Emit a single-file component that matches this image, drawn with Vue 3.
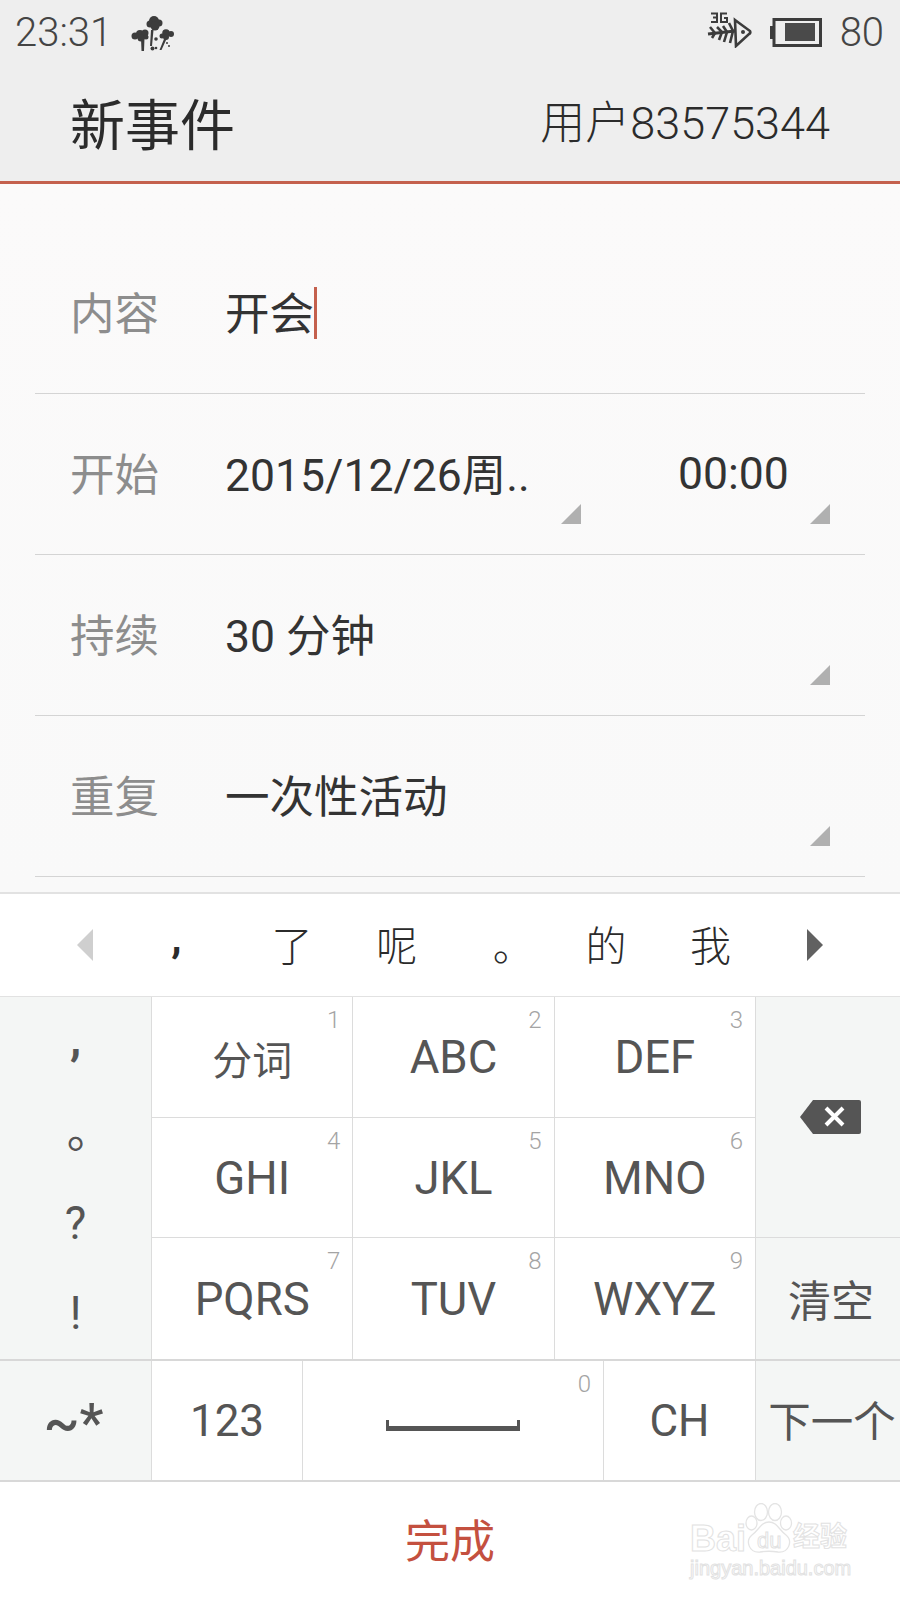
<script setup>
const rows = [
  { label: '内容', value: '开会', caret: true },
  { label: '开始', value: '2015/12/26周..', time: '00:00', arrow: true },
  { label: '持续', value: '30 分钟', arrow: true },
  { label: '重复', value: '一次性活动', arrow: true }
]
const suggestions = [
  { text: ',', cls: 'w-comma' },
  { text: '了', cls: '' },
  { text: '呢', cls: '' },
  { text: '。', cls: 'w-dot' },
  { text: '的', cls: '' },
  { text: '我', cls: '' }
]
const keys = [
  ['分词', '1', 'cjk'], ['ABC', '2', ''], ['DEF', '3', ''],
  ['GHI', '4', ''], ['JKL', '5', ''], ['MNO', '6', ''],
  ['PQRS', '7', ''], ['TUV', '8', ''], ['WXYZ', '9', '']
]
const punct = [
  { text: ',', cls: 'p-comma' },
  { text: '。', cls: 'p-dot' },
  { text: '?', cls: '' },
  { text: '!', cls: '' }
]
</script>

<template>
  <div class="phone">
    <header class="head">
      <div class="status">
        <span class="time">23:31</span>
        <svg class="flower" width="44" height="38" viewBox="0 0 44 38" fill="#3c3c3c">
          <circle cx="23" cy="8" r="5" /><circle cx="28" cy="10" r="3.500" /><circle cx="19" cy="11" r="3.500" /><circle cx="24" cy="13" r="4.500" />
          <circle cx="9" cy="21" r="4" /><circle cx="14" cy="20" r="3.500" /><circle cx="4" cy="23" r="3.500" /><circle cx="10" cy="25" r="3.500" /><circle cx="15" cy="24" r="2.500" />
          <circle cx="35" cy="20" r="3.800" /><circle cx="40" cy="21" r="3" /><circle cx="35" cy="24" r="3" /><circle cx="31" cy="23" r="2.500" />
          <path d="M10 25h3.500l-.5 13h-2.500zM20 17h2.500l-1.500 16h-2zM33 26h2.500l-5 11h-2z" />
          <circle cx="25" cy="26" r="1.800" /><circle cx="21.500" cy="35.500" r="2" /><circle cx="25" cy="35" r="1.300" /><circle cx="36" cy="30" r="1" /><circle cx="38" cy="33" r="1" />
        </svg>
        <span class="grow"></span>
        <svg class="fish" width="46" height="36" viewBox="0 0 46 36" fill="none" stroke="#3c3c3c">
          <path d="M1 22l27-3" stroke-width="3" />
          <path d="M3 15l5 6-3 5M10 15l5 5-3 8M16 14l4 6-3 10M22 11l4 8-3 12" stroke-width="2.600" />
          <path d="M28 8l15 11q1 2-1 3L29 34z" stroke-width="2.600" />
          <circle cx="36" cy="20" r="2" fill="#3c3c3c" stroke="none" />
          <path d="M4 1.500h6v4h-4h4v4.500h-6M20 1.500h-6v8.500h6v-4h-3" stroke-width="2" />
        </svg>
        <svg class="battery" width="52" height="29" viewBox="0 0 52 29">
          <rect x="0" y="8" width="3" height="13" fill="#3c3c3c" />
          <rect x="4" y="1.500" width="46.500" height="26" fill="none" stroke="#3c3c3c" stroke-width="3" />
          <rect x="15" y="5" width="30" height="18" fill="#4a4a4a" />
        </svg>
        <span class="level">80</span>
      </div>
      <div class="titlebar">
        <span class="title">新事件</span>
        <span class="account">用户83575344</span>
      </div>
    </header>

    <main class="form">
      <div v-for="row in rows" :key="row.label" class="row">
        <span class="label">{{ row.label }}</span>
        <span class="value">{{ row.value }}<i v-if="row.caret" class="caret"></i></span>
        <span v-if="row.time" class="time-value">{{ row.time }}</span>
        <i v-if="row.arrow" class="corner"></i>
        <i v-if="row.time" class="corner corner-date"></i>
      </div>
    </main>

    <div class="suggest">
      <svg class="arrow" width="18" height="32" viewBox="0 0 18 32"><path d="M17 0v32L1 16z" fill="#cfcfcf" /></svg>
      <div class="words">
        <span v-for="word in suggestions" :key="word.text" class="word" :class="word.cls">{{ word.text }}</span>
      </div>
      <svg class="arrow" width="18" height="32" viewBox="0 0 18 32"><path d="M1 0v32l16-16z" fill="#616161" /></svg>
    </div>

    <section class="keyboard">
      <div class="upper">
        <div class="side punct">
          <span v-for="p in punct" :key="p.text" :class="p.cls">{{ p.text }}</span>
        </div>
        <div class="keys">
          <div v-for="k in keys" :key="k[1]" class="key" :class="k[2]">
            <sup class="num">{{ k[1] }}</sup>{{ k[0] }}
          </div>
        </div>
        <div class="side actions">
          <div class="action del">
            <svg width="62" height="36" viewBox="0 0 62 36">
              <path d="M14 1h46a2 2 0 0 1 2 2v30a2 2 0 0 1-2 2H14L1 18z" fill="#555" />
              <path d="M27 9l17 17M44 9L27 26" stroke="#fff" stroke-width="4" />
            </svg>
          </div>
          <div class="action">清空</div>
        </div>
      </div>
      <div class="lower">
        <div class="lkey sym">~*</div>
        <div class="lkey k123">123</div>
        <div class="lkey space">
          <sup class="num">0</sup>
          <svg width="134" height="11" viewBox="0 0 134 11"><path d="M0 0h3v6h128V0h3v11H0z" fill="#555" /></svg>
        </div>
        <div class="lkey ch">CH</div>
        <div class="lkey next">下一个</div>
      </div>
    </section>

    <footer class="done">
      <span>完成</span>
      <div class="mark">
        <svg class="paw" width="48" height="51" viewBox="0 0 48 51" fill="#fff" stroke="#e4e4e4" stroke-width="1.300">
          <ellipse cx="16" cy="9" rx="6.500" ry="8.500" /><ellipse cx="30" cy="9" rx="6.500" ry="8.500" />
          <ellipse cx="6.500" cy="20" rx="5.500" ry="7" /><ellipse cx="41" cy="20" rx="5.500" ry="7" />
          <path d="M24 19c8 0 10 8 17 13 7 6 3 18-8 17-6-1-12-1-18 0-11 1-15-11-8-17 7-5 9-13 17-13z" />
        </svg>
        <span class="bai">Bai</span>
        <span class="du">du</span>
        <span class="jy">经验</span>
        <span class="mark-url">jingyan.baidu.com</span>
      </div>
    </footer>
  </div>
</template>

<style scoped>
.phone {
  width: 900px;
  height: 1600px;
  display: flex;
  flex-direction: column;
  overflow: hidden;
  background: #fff;
  color: #333;
  font-family: Roboto, "Noto Sans CJK SC", sans-serif;
  font-weight: 300;
}
.head {
  height: 184px;
  box-sizing: border-box;
  background: #eee;
  border-bottom: 3px solid #c4604d;
  flex: none;
}
.status {
  height: 62px;
  display: flex;
  align-items: center;
  padding: 2px 16px 0 15px;
  box-sizing: border-box;
  color: #444;
}
.time { font-size: 40px; }
.flower { margin-left: 19px; }
.grow { flex: 1; }
.fish { margin-right: 17px; margin-top: -4px; }
.battery { margin-right: 18px; }
.level { font-size: 40px; }
.titlebar {
  display: flex;
  align-items: center;
  justify-content: space-between;
  padding: 0 70px 0 70px;
  height: 120px;
  margin-top: -1px;
  color: #2b2b2b;
}
.title { font-size: 55px; font-weight: 400; }
.account { font-size: 45px; padding-bottom: 4px; }
.form {
  flex: 1;
  background: linear-gradient(#fbfafa, #f9f9f9);
  padding: 49px 35px 0;
  box-sizing: border-box;
  border-bottom: 2px solid #e2e2e2;
}
.row {
  height: 161px;
  box-sizing: border-box;
  border-bottom: 1px solid #d4d4d4;
  display: flex;
  align-items: center;
  padding: 0 0 6px 36px;
  position: relative;
  font-size: 44.500px;
}
.label { width: 155px; margin-left: -1px; color: #8d8d8d; font-weight: 400; }
.value { color: #333; font-weight: 400; display: inline-flex; align-items: center; }
.time-value { position: absolute; left: 643px; margin-top: 6px; color: #333; font-weight: 400; }
.caret { width: 3px; height: 52px; background: #c4604d; margin-top: 5px; }
.corner {
  position: absolute;
  right: 35px;
  bottom: 30px;
  width: 0;
  height: 0;
  border-style: solid;
  border-width: 0 0 20px 20px;
  border-color: transparent transparent #b0b0b0 transparent;
}
.corner-date { right: 284px; }
.suggest {
  height: 103px;
  flex: none;
  background: #fff;
  display: flex;
  align-items: center;
  padding: 0 76px;
  box-sizing: border-box;
  border-bottom: 1px solid #e2e2e2;
}
.words { flex: 1; display: flex; justify-content: center; margin-top: -5px; padding-right: 2px; }
.word { width: 104.600px; box-sizing: border-box; text-align: center; font-size: 41px; color: #2b2b2b; }
.w-comma { padding-right: 22px; font-weight: 700; font-size: 42px; }
.w-dot { padding-left: 24px; }
.keyboard { flex: none; color: #555; font-size: 45.500px; font-weight: 400; }
.upper { display: flex; height: 362px; border-bottom: 2px solid #d8d8d8; }
.side { background: #f4f6f5; flex: none; }
.punct {
  width: 152px;
  display: grid;
  grid-template-rows: repeat(4, 90.500px);
  justify-items: center;
  align-items: center;
  border-right: 1px solid #dcdcdc;
  box-sizing: border-box;
}
.p-comma { font-weight: 700; padding-bottom: 6px; }
.p-dot { padding-left: 28px; padding-bottom: 10px; }
.keys {
  flex: 1;
  display: grid;
  grid-template-columns: repeat(3, 1fr);
  grid-template-rows: repeat(3, 1fr);
  background: #fff;
}
.key {
  position: relative;
  display: flex;
  align-items: center;
  justify-content: center;
  border-right: 1px solid #dcdcdc;
  border-bottom: 1px solid #dcdcdc;
  padding-top: 2px;
  box-sizing: border-box;
}
.cjk { font-size: 40px; }
.key:nth-last-child(-n + 3) { border-bottom: none; }
.num {
  position: absolute;
  top: 7px;
  right: 12px;
  font-size: 24px;
  font-weight: 300;
  color: #a4a4a4;
  line-height: 32px;
}
.actions { width: 144px; display: flex; flex-direction: column; }
.action { display: flex; align-items: center; justify-content: center; height: 120px; padding-left: 6px; box-sizing: border-box; font-size: 43px; }
.del { height: 241px; border-bottom: 1px solid #dcdcdc; padding-left: 4px; }
.lower { display: flex; height: 119px; border-bottom: 2px solid #d8d8d8; font-size: 44px; }
.lkey {
  display: flex;
  align-items: center;
  justify-content: center;
  position: relative;
  box-sizing: border-box;
  border-right: 1px solid #dcdcdc;
  background: #fff;
}
.sym { width: 152px; background: #f4f6f5; font-size: 54px; font-weight: 500; padding-top: 4px; padding-right: 4px; }
.k123 { width: 151px; }
.space { width: 301px; padding-top: 10px; }
.ch { width: 152px; }
.next { width: 144px; background: #f4f6f5; border-right: none; font-size: 42.500px; white-space: nowrap; padding-left: 8px; padding-bottom: 4px; }
.done {
  height: 118px;
  flex: none;
  position: relative;
  display: flex;
  align-items: center;
  justify-content: center;
  padding-bottom: 6px;
  box-sizing: border-box;
  font-size: 45px;
  font-weight: 400;
  color: #c4503f;
}
.mark {
  position: absolute;
  left: 690px;
  top: 21px;
  width: 170px;
  height: 90px;
  color: transparent;
  -webkit-text-stroke: 1px #e2e2e2;
  font-family: "Liberation Sans", "Noto Sans CJK SC", sans-serif;
}
.paw { position: absolute; left: 55px; top: 0; }
.bai, .du, .jy, .mark-url { position: absolute; white-space: nowrap; line-height: 1; }
.bai { left: 0; top: 18px; font-size: 36px; font-weight: 700; }
.du { left: 67px; top: 27px; font-size: 22px; }
.jy { left: 103px; top: 21px; font-size: 27px; font-weight: 700; }
.mark-url { left: 0; top: 55px; font-size: 20px; }
</style>
